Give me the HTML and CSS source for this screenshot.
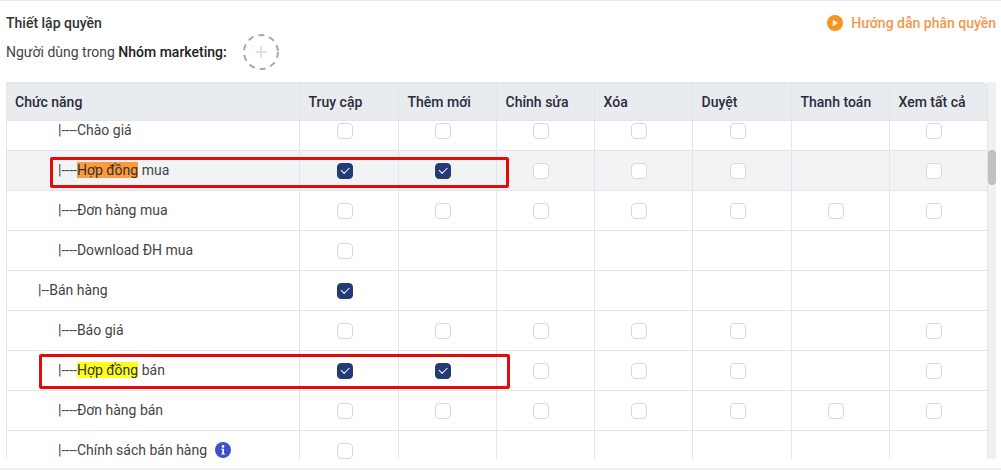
FILE: index.html
```html
<!DOCTYPE html>
<html lang="en">
<head>
    <meta charset="UTF-8">
    <title>Thiết lập quyền</title>
    <link rel="stylesheet" href="styles.css">
</head>
<body>
    <div class="page">
        <div class="top">
            <div class="top-left">
                <h3>Thiết lập quyền</h3>
                <div class="group-line">
                    <span>Người dùng trong <b>Nhóm marketing:</b></span>
                    <svg class="add-user" width="38" height="38" viewBox="0 0 38 38">
                        <circle cx="19" cy="19" r="17" fill="none" stroke="#a9a9a9" stroke-width="2" stroke-dasharray="6 5"/>
                        <path d="M19 13.5v11M13.5 19h11" stroke="#c9d8f2" stroke-width="1.5"/>
                    </svg>
                </div>
            </div>
            <a class="guide">
                <svg width="16" height="16" viewBox="0 0 16 16">
                    <circle cx="8" cy="8" r="8" fill="#f7931e"/>
                    <path d="M5.8 4.8v6.4L11 8z" fill="#fff"/>
                </svg>
                Hướng dẫn phân quyền
            </a>
        </div>

        <div class="table-wrap">
            <div class="table">
                <div class="row head">
                    <div class="cell name">Chức năng</div>
                    <div class="cell">Truy cập</div>
                    <div class="cell">Thêm mới</div>
                    <div class="cell">Chỉnh sửa</div>
                    <div class="cell">Xóa</div>
                    <div class="cell">Duyệt</div>
                    <div class="cell">Thanh toán</div>
                    <div class="cell">Xem tất cả</div>
                </div>
                <div class="body">
                    <div class="rows">
                        <div class="row">
                            <div class="cell name lv2">|----Chào giá</div>
                            <div class="cell"><span class="cb"></span></div>
                            <div class="cell"><span class="cb"></span></div>
                            <div class="cell"><span class="cb"></span></div>
                            <div class="cell"><span class="cb"></span></div>
                            <div class="cell"><span class="cb"></span></div>
                            <div class="cell"></div>
                            <div class="cell"><span class="cb"></span></div>
                        </div>
                        <div class="row active">
                            <div class="cell name lv2">|----<mark class="orange">Hợp đồng</mark> mua</div>
                            <div class="cell"><span class="cb on"></span></div>
                            <div class="cell"><span class="cb on"></span></div>
                            <div class="cell"><span class="cb"></span></div>
                            <div class="cell"><span class="cb"></span></div>
                            <div class="cell"><span class="cb"></span></div>
                            <div class="cell"></div>
                            <div class="cell"><span class="cb"></span></div>
                        </div>
                        <div class="row">
                            <div class="cell name lv2">|----Đơn hàng mua</div>
                            <div class="cell"><span class="cb"></span></div>
                            <div class="cell"><span class="cb"></span></div>
                            <div class="cell"><span class="cb"></span></div>
                            <div class="cell"><span class="cb"></span></div>
                            <div class="cell"><span class="cb"></span></div>
                            <div class="cell"><span class="cb"></span></div>
                            <div class="cell"><span class="cb"></span></div>
                        </div>
                        <div class="row">
                            <div class="cell name lv2">|----Download ĐH mua</div>
                            <div class="cell"><span class="cb"></span></div>
                            <div class="cell"></div>
                            <div class="cell"></div>
                            <div class="cell"></div>
                            <div class="cell"></div>
                            <div class="cell"></div>
                            <div class="cell"></div>
                        </div>
                        <div class="row">
                            <div class="cell name lv1">|--Bán hàng</div>
                            <div class="cell"><span class="cb on"></span></div>
                            <div class="cell"></div>
                            <div class="cell"></div>
                            <div class="cell"></div>
                            <div class="cell"></div>
                            <div class="cell"></div>
                            <div class="cell"></div>
                        </div>
                        <div class="row">
                            <div class="cell name lv2">|----Báo giá</div>
                            <div class="cell"><span class="cb"></span></div>
                            <div class="cell"><span class="cb"></span></div>
                            <div class="cell"><span class="cb"></span></div>
                            <div class="cell"><span class="cb"></span></div>
                            <div class="cell"><span class="cb"></span></div>
                            <div class="cell"></div>
                            <div class="cell"><span class="cb"></span></div>
                        </div>
                        <div class="row">
                            <div class="cell name lv2">|----<mark class="yellow">Hợp đồng</mark> bán</div>
                            <div class="cell"><span class="cb on"></span></div>
                            <div class="cell"><span class="cb on"></span></div>
                            <div class="cell"><span class="cb"></span></div>
                            <div class="cell"><span class="cb"></span></div>
                            <div class="cell"><span class="cb"></span></div>
                            <div class="cell"></div>
                            <div class="cell"><span class="cb"></span></div>
                        </div>
                        <div class="row">
                            <div class="cell name lv2">|----Đơn hàng bán</div>
                            <div class="cell"><span class="cb"></span></div>
                            <div class="cell"><span class="cb"></span></div>
                            <div class="cell"><span class="cb"></span></div>
                            <div class="cell"><span class="cb"></span></div>
                            <div class="cell"><span class="cb"></span></div>
                            <div class="cell"><span class="cb"></span></div>
                            <div class="cell"><span class="cb"></span></div>
                        </div>
                        <div class="row">
                            <div class="cell name lv2">|----Chính sách bán hàng<svg class="info" width="16" height="16" viewBox="0 0 16 16">
                                    <circle cx="8" cy="8" r="8" fill="#3f51c8"/>
                                    <circle cx="8" cy="4.4" r="1.3" fill="#fff"/>
                                    <path d="M6.4 6.8h2.6v4.6h1v1.2H6.2v-1.2h1.1V8H6.4z" fill="#fff"/>
                                </svg></div>
                            <div class="cell"><span class="cb"></span></div>
                            <div class="cell"></div>
                            <div class="cell"></div>
                            <div class="cell"></div>
                            <div class="cell"></div>
                            <div class="cell"></div>
                            <div class="cell"></div>
                        </div>
                    </div>
                </div>
            </div>
            <div class="scrollbar"><div class="thumb"></div></div>

            <!-- red marks drawn over the table -->
            <div class="mark-box box-buy"></div>
            <div class="mark-box box-sell"></div>
        </div>
    </div>
</body>
</html>
```

FILE: styles.css
```css
/* General Styles */
html, body {
    margin: 0;
    height: 470px;
    overflow: hidden;
}

body {
    font-family: 'Roboto', sans-serif;
    font-size: 14px;
    color: #444;
    background: #fff;
}

.page {
    height: 467px;
    border-top: 1px solid #e8e8e8;
    border-bottom: 2px solid #eee;
}

.top {
    display: flex;
    justify-content: space-between;
    height: 81px;
    padding-left: 6px;
}

.top h3 {
    margin: 14px 0 0;
    font-size: 14px;
    font-weight: 500;
    line-height: 17px;
    color: #333;
}

.group-line {
    display: flex;
    align-items: center;
    gap: 15px;
    margin-top: 1px;
    color: #444;
}

.group-line b {
    font-weight: 500;
    color: #222;
}

.guide {
    display: flex;
    align-items: center;
    gap: 8px;
    height: 16px;
    margin-top: 14px;
    margin-right: 5px;
    font-weight: 500;
    color: #ee9a4c;
}

/* Table */
.table-wrap {
    position: relative;
    display: flex;
    margin-left: 6px;
    width: 990px;
    height: 377px;
    overflow: hidden;
}

.table {
    width: 982px;
    box-sizing: border-box;
    border-left: 1px solid #e3e5e8;
    display: flex;
    flex-direction: column;
}

.row {
    display: grid;
    grid-template-columns: 293px 99px 98px 98px 98px 99px 98px 98px;
    height: 40px;
    box-sizing: border-box;
    border-bottom: 1px solid #e3e5e8;
}

.cell {
    display: flex;
    align-items: center;
    justify-content: center;
    box-sizing: border-box;
    border-right: 1px solid #e3e5e8;
    padding: 1px 9px 0 0;
}

.cell.name {
    justify-content: flex-start;
    white-space: pre;
    padding-top: 0;
    padding-right: 0;
    padding-bottom: 1px;
}

.lv1 { padding-left: 31px; }
.lv2 { padding-left: 51px; }

.head {
    height: 39px;
    background: #e9ecef;
    border-top: 1px solid #e3e5e8;
    border-top-right-radius: 6px;
    font-weight: 500;
    color: #2b2b3d;
}

.head .cell {
    justify-content: flex-start;
    padding: 0 0 0 8.5px;
}

.head .cell.name {
    padding-left: 8px;
}

.body {
    flex: 1;
    overflow: hidden;
}

.rows {
    margin-top: -10px;
}

.active {
    background: #f2f3f5;
}

mark {
    color: #333;
}

.orange { background: #fd9a3c; }
.yellow { background: #ffff1a; }

.info {
    margin-left: 8px;
}

.cb {
    position: relative;
    display: block;
    width: 16px;
    height: 16px;
    box-sizing: border-box;
    border: 1px solid #d9d9d9;
    border-radius: 4px;
    background: #fff;
}

.cb.on {
    background: #233a73;
    border-color: #233a73;
}

.cb.on::after {
    content: "";
    position: absolute;
    left: 3px;
    top: 3px;
    width: 7px;
    height: 3.5px;
    border-left: 1.5px solid #fff;
    border-bottom: 1.5px solid #fff;
    transform: rotate(-45deg);
}

.scrollbar {
    width: 8px;
    background: #f1f1f1;
}

.thumb {
    width: 8px;
    height: 35px;
    margin-top: 68px;
    border-radius: 4px;
    background: #c1c1c1;
}

/* Red marks */
.mark-box {
    position: absolute;
    box-sizing: border-box;
    border: 3px solid #e30b0b;
    border-radius: 2px;
}

.box-buy {
    left: 44px;
    top: 75px;
    width: 459px;
    height: 31px;
}

.box-sell {
    left: 33px;
    top: 272px;
    width: 471px;
    height: 35px;
}
```
